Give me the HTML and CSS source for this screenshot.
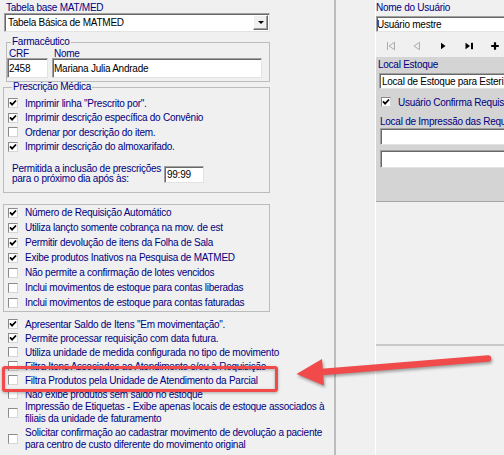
FILE: index.html
```html
<!DOCTYPE html>
<html lang="pt-BR">
<head>
    <meta charset="UTF-8">
    <title>Parâmetros de Estoque</title>
    <link rel="stylesheet" href="styles.css">
</head>
<body>
<div class="window">
    <!-- coluna da esquerda: parâmetros gerais -->
    <div class="left-pane">
        <div class="caption top-caption">Tabela base MAT/MED</div>
        <div class="combo">
            <span class="combo-text">Tabela Básica de MATMED</span>
            <span class="combo-btn"><span class="arrow-down"></span></span>
        </div>

        <div class="group pharm">
            <div class="group-title">Farmacêutico</div>
            <div class="pharm-row">
                <div class="crf">
                    <div class="caption small">CRF</div>
                    <div class="edit">2458</div>
                </div>
                <div class="nome">
                    <div class="caption small">Nome</div>
                    <div class="edit">Mariana Julia Andrade</div>
                </div>
            </div>
        </div>

        <div class="group presc">
            <div class="group-title">Prescrição Médica</div>
            <div class="checks">
                <div class="check"><span class="box"><svg viewBox="0 0 8 8"><path d="M1 3.4 3.1 5.6 7 1.5"/></svg></span>Imprimir linha "Prescrito por".</div>
                <div class="check"><span class="box"><svg viewBox="0 0 8 8"><path d="M1 3.4 3.1 5.6 7 1.5"/></svg></span>Imprimir descrição específica do Convênio</div>
                <div class="check"><span class="box"></span>Ordenar por descrição do item.</div>
                <div class="check"><span class="box"><svg viewBox="0 0 8 8"><path d="M1 3.4 3.1 5.6 7 1.5"/></svg></span>Imprimir descrição do almoxarifado.</div>
            </div>
            <div class="time-row">
                <span class="time-label">Permitida a inclusão de prescrições<br>para o próximo dia após às:</span>
                <div class="edit time">99:99</div>
            </div>
        </div>

        <div class="group options">
            <div class="check row15"><span class="box"><svg viewBox="0 0 8 8"><path d="M1 3.4 3.1 5.6 7 1.5"/></svg></span>Número de Requisição Automático</div>
            <div class="check row15"><span class="box"><svg viewBox="0 0 8 8"><path d="M1 3.4 3.1 5.6 7 1.5"/></svg></span>Utiliza lançto somente cobrança na mov. de est</div>
            <div class="check row15"><span class="box"><svg viewBox="0 0 8 8"><path d="M1 3.4 3.1 5.6 7 1.5"/></svg></span>Permitir devolução de itens da Folha de Sala</div>
            <div class="check row15"><span class="box"><svg viewBox="0 0 8 8"><path d="M1 3.4 3.1 5.6 7 1.5"/></svg></span>Exibe produtos Inativos na Pesquisa de MATMED</div>
            <div class="check row15"><span class="box"></span>Não permite a confirmação de lotes vencidos</div>
            <div class="check row15"><span class="box"></span>Inclui movimentos de estoque para contas liberadas</div>
            <div class="check row15"><span class="box"></span>Inclui movimentos de estoque para contas faturadas</div>
        </div>

        <div class="loose">
            <div class="check row14"><span class="box"><svg viewBox="0 0 8 8"><path d="M1 3.4 3.1 5.6 7 1.5"/></svg></span>Apresentar Saldo de Itens "Em movimentação".</div>
            <div class="check row14"><span class="box"><svg viewBox="0 0 8 8"><path d="M1 3.4 3.1 5.6 7 1.5"/></svg></span>Permite processar requisição com data futura.</div>
            <div class="check row14"><span class="box"></span>Utiliza unidade de medida configurada no tipo de movimento</div>
            <div class="check row14"><span class="box"></span>Filtra Itens Associados ao Atendimento e/ou à Requisição</div>
            <div class="check row14"><span class="box"></span>Filtra Produtos pela Unidade de Atendimento da Parcial</div>
            <div class="check row14"><span class="box"></span>Não exibe produtos sem saldo no estoque</div>
            <div class="check multi"><span class="box"></span><span>Impressão de Etiquetas - Exibe apenas locais de estoque associados à<br>filiais da unidade de faturamento</span></div>
            <div class="check multi"><span class="box"></span><span>Solicitar confirmação ao cadastrar movimento de devolução a paciente<br>para centro de custo diferente do movimento original</span></div>
        </div>
    </div>

    <!-- coluna da direita: usuários e locais -->
    <div class="right-pane">
        <div class="caption">Nome do Usuário</div>
        <div class="edit user">Usuário mestre</div>

        <div class="nav">
            <span class="nav-btn"><svg viewBox="0 0 10 10" class="off"><path d="M1.5 1v8M8.5 1.3 3 5l5.5 3.7z"/></svg></span>
            <span class="nav-btn"><svg viewBox="0 0 10 10" class="off"><path d="M7.5 1.3 2 5l5.5 3.7z"/></svg></span>
            <span class="nav-btn"><svg viewBox="0 0 10 10" class="on"><path d="M3 1.8 7.5 5 3 8.2z"/></svg></span>
            <span class="nav-btn"><svg viewBox="0 0 10 10" class="on"><path d="M1.5 1.8 6 5 1.5 8.2z"/><rect x="7" y="1.8" width="2" height="6.4"/></svg></span>
            <span class="nav-btn"><svg viewBox="0 0 10 10" class="plus"><path d="M5 1.2v7.6M1.2 5h7.6"/></svg></span>
        </div>

        <div class="local">
            <div class="caption local-caption">Local Estoque</div>
            <div class="edit local-edit">Local de Estoque para Esterilização</div>
            <div class="check local-check"><span class="box"><svg viewBox="0 0 8 8"><path d="M1 3.4 3.1 5.6 7 1.5"/></svg></span>Usuário Confirma Requisições</div>
            <div class="caption print-caption">Local de Impressão das Requisições</div>
            <div class="edit print-edit"></div>
            <div class="edit print-edit second"></div>
        </div>

        <div class="sub-panel"></div>
        <div class="sub-panel lower"></div>
    </div>

    <!-- destaque da opção -->
    <svg class="annot" width="504" height="455" viewBox="0 0 504 455">
        <rect x="3.5" y="367.5" width="273" height="23" rx="1.5" class="mark"/>
        <g class="arrow">
            <line x1="488" y1="358.5" x2="322" y2="372"/>
            <polygon points="296.5,374 322,359 324,385.5"/>
        </g>
    </svg>
</div>
</body>
</html>
```

FILE: styles.css
```css
body {
    margin: 0;
    background: #f0f0f0;
    font-family: "Liberation Sans", Arial, sans-serif;
    font-size: 10px;
    letter-spacing: -0.25px;
    color: #000080;
    overflow: hidden;
}
.window {
    position: relative;
    display: flex;
    width: 504px;
    height: 455px;
    overflow: hidden;
}
.left-pane {
    flex: none;
    width: 334px;
    padding-top: 2px;
    border-right: 2px solid #bdbdbd;
    box-sizing: content-box;
}
.caption {
    line-height: 11px;
    white-space: nowrap;
}
.top-caption {
    padding-left: 6px;
}
.caption.small {
    line-height: 9px;
    padding-left: 2px;
}

/* campos de edição com borda rebaixada */
.edit {
    display: flex;
    align-items: center;
    box-sizing: border-box;
    background: #fff;
    color: #000;
    border: 1px solid;
    border-color: #a0a0a0 #e3e3e3 #e3e3e3 #a0a0a0;
    box-shadow: inset 1px 1px 0 #696969;
    padding-left: 1px;
    white-space: nowrap;
    overflow: hidden;
}
.combo {
    display: flex;
    align-items: center;
    box-sizing: border-box;
    width: 266px;
    height: 19px;
    margin-left: 4px;
    background: #fff;
    color: #000;
    border: 1px solid;
    border-color: #a0a0a0 #e3e3e3 #e3e3e3 #a0a0a0;
    box-shadow: inset 1px 1px 0 #696969;
}
.combo-text {
    padding-left: 3px;
}
.combo-btn {
    display: flex;
    align-items: center;
    justify-content: center;
    box-sizing: border-box;
    width: 15px;
    height: 15px;
    margin-left: auto;
    margin-right: 1px;
    background: #f0f0f0;
    border: 1px solid;
    border-color: #fff #696969 #696969 #fff;
    box-shadow: inset -1px -1px 0 #a0a0a0;
}
.arrow-down {
    width: 0;
    height: 0;
    border-left: 3px solid transparent;
    border-right: 3px solid transparent;
    border-top: 3px solid #000;
}

/* caixas de grupo */
.group {
    box-sizing: border-box;
    border: 1px solid #bcbcbc;
}
.group-title {
    width: fit-content;
    margin-top: -6px;
    padding: 0 1px;
    line-height: 10px;
    background: #f0f0f0;
}
.pharm {
    width: 264px;
    margin: 10px 0 0 6px;
    padding-bottom: 3px;
}
.pharm .group-title {
    margin-left: 4px;
}
.pharm-row {
    display: flex;
    gap: 4px;
    margin-top: 2px;
}
.crf {
    width: 41px;
}
.nome {
    width: 210px;
}
.pharm .edit {
    height: 20px;
}
.presc {
    width: 267px;
    margin: 5px 0 0 3px;
    padding-bottom: 8px;
}
.presc .group-title {
    margin-left: 8px;
}
.checks {
    margin-top: 4px;
    padding-left: 4px;
}
.check {
    display: flex;
    align-items: center;
    height: 14.5px;
    white-space: nowrap;
}
.box {
    flex: none;
    display: flex;
    align-items: center;
    justify-content: center;
    box-sizing: border-box;
    width: 10px;
    height: 10px;
    margin-right: 7px;
    background: #fff;
    border: 1px solid;
    border-color: #8a8a8a #d6d6d6 #d6d6d6 #8a8a8a;
}
.box svg {
    width: 8px;
    height: 8px;
    fill: none;
    stroke: #000;
    stroke-width: 1.8;
}
.time-row {
    display: flex;
    align-items: center;
    height: 20px;
    margin-top: 10px;
    padding-left: 8px;
}
.time-label {
    width: 152px;
    line-height: 10px;
    white-space: nowrap;
}
.edit.time {
    width: 40px;
    height: 17px;
    padding-left: 2px;
}
.options {
    width: 267px;
    margin: 11px 0 0 3px;
    padding: 0 0 1px 4px;
}
.check.row15 {
    height: 15px;
}
.loose {
    margin-top: 5px;
    padding-left: 8px;
}
.check.row14 {
    height: 14px;
}
.check.multi {
    height: auto;
    line-height: 12px;
    margin-bottom: 2px;
}

/* painel de usuários */
.right-pane {
    flex: none;
    width: 200px;
    margin-left: 39px;
    padding-top: 2px;
    border-left: 1px solid #fff;
}
.edit.user {
    height: 16px;
    margin-top: 3px;
    padding-left: 0;
}
.nav {
    display: flex;
    height: 18px;
    margin-top: 5px;
    padding-left: 2px;
}
.nav-btn {
    display: flex;
    align-items: center;
    justify-content: center;
    width: 26px;
    flex: none;
}
.nav-btn svg {
    width: 10px;
    height: 10px;
}
.nav-btn svg.off {
    fill: none;
    stroke: #ababab;
    stroke-width: 1;
}
.nav-btn svg.on {
    fill: #000;
}
.nav-btn svg.plus {
    fill: none;
    stroke: #000;
    stroke-width: 2.2;
}
.local {
    height: 144px;
    margin-top: 2px;
    padding-top: 2px;
    box-sizing: border-box;
    background: #d4d4d4;
}
.local-caption {
    padding-left: 2px;
}
.edit.local-edit {
    height: 16px;
    margin: 3px 0 0 3px;
    padding-left: 2px;
}
.check.local-check {
    height: 14px;
    margin-top: 6px;
    padding-left: 5px;
}
.print-caption {
    line-height: 10px;
    margin-top: 8px;
    padding-left: 4px;
}
.edit.print-edit {
    height: 17px;
    margin: 1px 0 0 4px;
}
.edit.print-edit.second {
    height: 18px;
    margin-top: 5px;
}
.sub-panel {
    height: 142px;
    border-top: 1px solid #a6a6a6;
}
.sub-panel.lower {
    height: 200px;
    border-top: 2px solid #c8c8c8;
}

/* marcação em vermelho sobre a tela */
.annot {
    position: absolute;
    left: 0;
    top: 0;
    pointer-events: none;
}
.annot .mark {
    fill: none;
    stroke: #f04a4b;
    stroke-width: 3;
    filter: drop-shadow(0 1px 1.5px rgba(0, 0, 0, 0.3));
}
.annot .arrow {
    filter: drop-shadow(1px 2px 1.5px rgba(0, 0, 0, 0.35));
}
.annot .arrow line {
    stroke: #f04a4b;
    stroke-width: 6.5;
    stroke-linecap: round;
}
.annot .arrow polygon {
    fill: #f04a4b;
}
```
